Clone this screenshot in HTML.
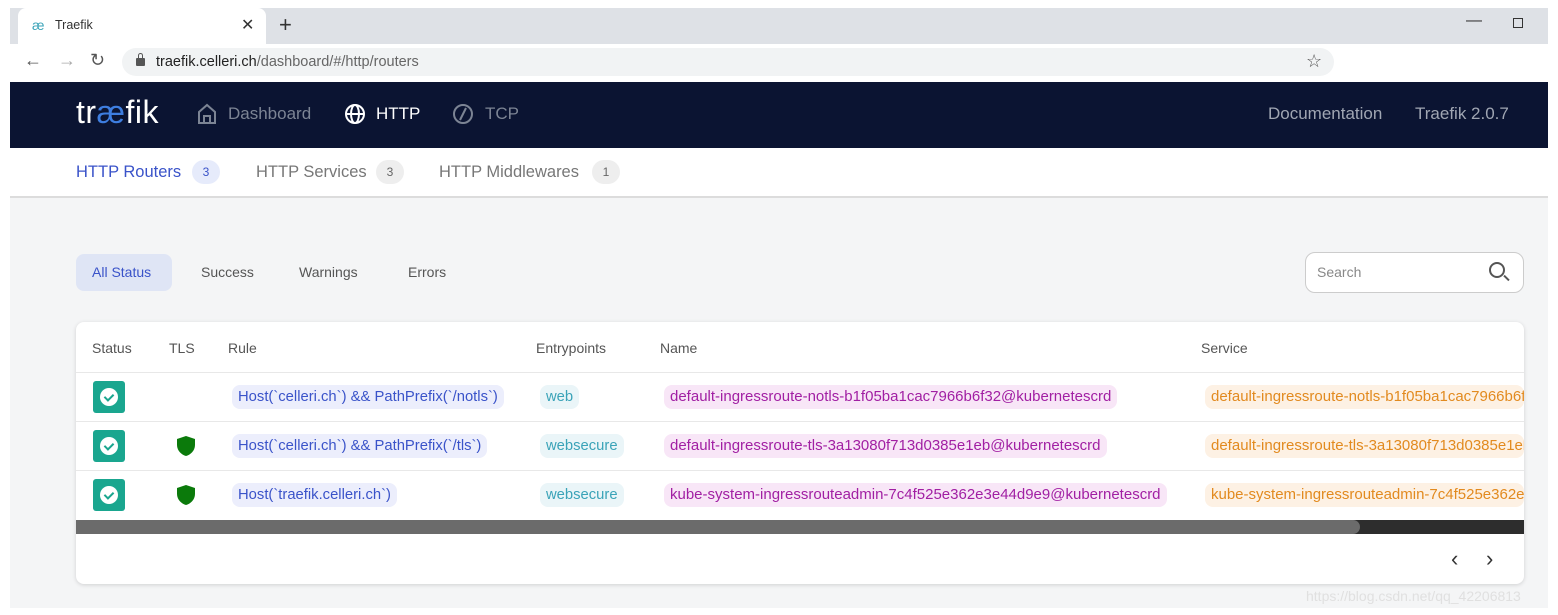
<!DOCTYPE html>
<html><head><style>
*{box-sizing:border-box;margin:0;padding:0}
body{width:1558px;height:615px;background:#fff;font-family:"Liberation Sans",sans-serif;position:relative;overflow:hidden}
.abs{position:absolute}
.tabbar{left:10px;top:8px;width:1538px;height:36px;background:#dee1e6}
.tab{left:18px;top:8px;width:248px;height:36px;background:#fff;border-radius:8px 8px 0 0}
.addr{left:10px;top:44px;width:1538px;height:37px;background:#fff}
.url{left:122px;top:48px;width:1212px;height:28px;background:#f1f3f4;border-radius:14px}
.nav{left:10px;top:82px;width:1538px;height:66px;background:#0b1432}
.sub{left:10px;top:148px;width:1538px;height:50px;background:#fff;border-bottom:2px solid #dcdcdc}
.main{left:10px;top:198px;width:1538px;height:410px;background:#f4f5f6}
.navt{color:#7c8494;font-size:17px;top:104px}
.cnt{display:inline-block;width:28px;height:24px;border-radius:12px;font-size:12px;text-align:center;line-height:24px;color:#666;background:#eee;position:absolute}
.card{left:76px;top:322px;width:1448px;height:262px;background:#fff;border-radius:8px;box-shadow:0 1px 4px rgba(0,0,0,.15);overflow:hidden}
.th{top:340px;font-size:14px;color:#555}
.row{left:76px;width:1448px;height:49px;border-top:1px solid #e8e8e8}
.chk{left:93px;width:32px;height:32px;background:#1aa68f;border-radius:3px}
.chk::before{content:"";position:absolute;left:7px;top:7px;width:18px;height:18px;border-radius:50%;background:#fff}
.chk::after{content:"";position:absolute;left:13px;top:11px;width:4px;height:7px;border:solid #1aa68f;border-width:0 2px 2px 0;transform:rotate(45deg)}
.pill{height:24px;line-height:24px;border-radius:8px;font-size:14.8px;padding:0 6px;white-space:nowrap}
.r{background:#eceefc;color:#3a53c9}
.e{background:#eaf5f8;color:#3aa3b8}
.n{background:#f8e6f7;color:#a11fa3;font-size:15px}
.s{background:#fdf1e4;color:#e28a1f;overflow:hidden;font-size:15px}
</style></head><body>
<div class="abs tabbar"></div>
<div class="abs tab"></div>
<div class="abs" style="left:32px;top:17px;color:#3aa3b8;font-size:14px">æ</div>
<div class="abs" style="left:55px;top:18px;font-size:12.5px;color:#333">Traefik</div>
<div class="abs" style="left:241px;top:15px;font-size:16px;color:#333">✕</div>
<div class="abs" style="left:279px;top:12px;font-size:22px;color:#333">+</div>
<div class="abs" style="left:1466px;top:12px;font-size:16px;color:#333">—</div>
<div class="abs" style="left:1513px;top:18px;width:10px;height:10px;border:1.5px solid #333"></div>
<div class="abs addr"></div>
<div class="abs" style="left:24px;top:50px;font-size:18px;color:#555">←</div>
<div class="abs" style="left:58px;top:50px;font-size:18px;color:#aaa">→</div>
<div class="abs" style="left:90px;top:50px;font-size:18px;color:#555">↻</div>
<div class="abs url"></div>
<div class="abs" style="left:136px;top:58px;width:9px;height:8px;background:#555;border-radius:1px"></div>
<div class="abs" style="left:138px;top:53px;width:5px;height:6px;border:1.5px solid #555;border-bottom:none;border-radius:3px 3px 0 0"></div>
<div class="abs" style="left:156px;top:54px;font-size:14.5px;color:#222">traefik.celleri.ch<span style="color:#666">/dashboard/#/http/routers</span></div>
<div class="abs" style="left:1306px;top:51px;font-size:18px;color:#555">☆</div>
<div class="abs nav"></div>
<div class="abs" style="left:76px;top:94px;font-size:32px;color:#fff;letter-spacing:.5px">tr<span style="color:#3e7ee0">æ</span>fik</div>
<svg class="abs" style="left:197px;top:103px" width="20" height="22" viewBox="0 0 20 22"><path d="M2 9 L10 2 L18 9 V20 H2 Z M7 20 V13 H13 V20" fill="none" stroke="#7c8494" stroke-width="2"/></svg>
<div class="abs navt" style="left:228px">Dashboard</div>
<svg class="abs" style="left:344px;top:103px" width="22" height="22" viewBox="0 0 22 22"><circle cx="11" cy="11" r="9" fill="none" stroke="#fff" stroke-width="2"/><ellipse cx="11" cy="11" rx="4" ry="9" fill="none" stroke="#fff" stroke-width="2"/><path d="M2 11 H20" stroke="#fff" stroke-width="2"/></svg>
<div class="abs navt" style="left:376px;color:#fff">HTTP</div>
<svg class="abs" style="left:452px;top:103px" width="22" height="22" viewBox="0 0 22 22"><circle cx="11" cy="11" r="9" fill="none" stroke="#7c8494" stroke-width="2"/><path d="M8 17 L14 5" stroke="#7c8494" stroke-width="2"/></svg>
<div class="abs navt" style="left:485px">TCP</div>
<div class="abs navt" style="left:1268px;color:#a0a6b3">Documentation</div>
<div class="abs navt" style="left:1415px;color:#a0a6b3">Traefik 2.0.7</div>
<div class="abs sub"></div>
<div class="abs" style="left:76px;top:163px;font-size:16.5px;color:#3a53c9">HTTP Routers</div>
<span class="cnt" style="left:192px;top:160px;background:#e6ebfb;color:#3a53c9">3</span>
<div class="abs" style="left:256px;top:163px;font-size:16.5px;color:#777">HTTP Services</div>
<span class="cnt" style="left:376px;top:160px">3</span>
<div class="abs" style="left:439px;top:163px;font-size:16.5px;color:#777">HTTP Middlewares</div>
<span class="cnt" style="left:592px;top:160px">1</span>
<div class="abs main"></div>
<div class="abs" style="left:76px;top:254px;width:96px;height:37px;background:#dfe5f5;border-radius:8px"></div>
<div class="abs" style="left:92px;top:264px;font-size:14px;color:#3a53c9">All Status</div>
<div class="abs" style="left:201px;top:264px;font-size:14px;color:#555">Success</div>
<div class="abs" style="left:299px;top:264px;font-size:14px;color:#555">Warnings</div>
<div class="abs" style="left:408px;top:264px;font-size:14px;color:#555">Errors</div>
<div class="abs" style="left:1305px;top:252px;width:219px;height:41px;background:#fff;border:1px solid #ccc;border-radius:10px"></div>
<div class="abs" style="left:1317px;top:264px;font-size:14px;color:#888">Search</div>
<div class="abs" style="left:1489px;top:262px;width:16px;height:16px;border:2px solid #555;border-radius:50%"></div>
<div class="abs" style="left:1503px;top:277px;width:7px;height:2px;background:#555;transform:rotate(45deg)"></div>
<div class="abs card"></div>
<div class="abs th" style="left:92px">Status</div>
<div class="abs th" style="left:169px">TLS</div>
<div class="abs th" style="left:228px">Rule</div>
<div class="abs th" style="left:536px">Entrypoints</div>
<div class="abs th" style="left:660px">Name</div>
<div class="abs th" style="left:1201px">Service</div>
<div class="abs row" style="top:372px"></div>
<div class="abs row" style="top:421px"></div>
<div class="abs row" style="top:470px"></div>
<div class="abs chk" style="top:381px"></div>
<div class="abs chk" style="top:430px"></div>
<div class="abs chk" style="top:479px"></div>
<svg class="abs" style="left:176px;top:435px" width="20" height="22" viewBox="0 0 20 22"><path d="M10 1 L19 4 V10 C19 16 14 20 10 21 C6 20 1 16 1 10 V4 Z" fill="#0b7a0b"/></svg>
<svg class="abs" style="left:176px;top:484px" width="20" height="22" viewBox="0 0 20 22"><path d="M10 1 L19 4 V10 C19 16 14 20 10 21 C6 20 1 16 1 10 V4 Z" fill="#0b7a0b"/></svg>
<div class="abs pill r" style="left:232px;top:385px">Host(`celleri.ch`) &amp;&amp; PathPrefix(`/notls`)</div>
<div class="abs pill r" style="left:232px;top:434px">Host(`celleri.ch`) &amp;&amp; PathPrefix(`/tls`)</div>
<div class="abs pill r" style="left:232px;top:483px">Host(`traefik.celleri.ch`)</div>
<div class="abs pill e" style="left:540px;top:385px">web</div>
<div class="abs pill e" style="left:540px;top:434px">websecure</div>
<div class="abs pill e" style="left:540px;top:483px">websecure</div>
<div class="abs pill n" style="left:664px;top:385px">default-ingressroute-notls-b1f05ba1cac7966b6f32@kubernetescrd</div>
<div class="abs pill n" style="left:664px;top:434px">default-ingressroute-tls-3a13080f713d0385e1eb@kubernetescrd</div>
<div class="abs pill n" style="left:664px;top:483px">kube-system-ingressrouteadmin-7c4f525e362e3e44d9e9@kubernetescrd</div>
<div class="abs pill s" style="left:1205px;top:385px;width:319px">default-ingressroute-notls-b1f05ba1cac7966b6f32@kubernetescrd</div>
<div class="abs pill s" style="left:1205px;top:434px;width:319px">default-ingressroute-tls-3a13080f713d0385e1eb@kubernetescrd</div>
<div class="abs pill s" style="left:1205px;top:483px;width:319px">kube-system-ingressrouteadmin-7c4f525e362e3e44d9e9@kubernetescrd</div>
<div class="abs" style="left:76px;top:520px;width:1448px;height:14px;background:#2d2d2d"></div>
<div class="abs" style="left:76px;top:520px;width:1284px;height:14px;background:#6b6b6b;border-radius:0 7px 7px 0"></div>
<div class="abs" style="left:1451px;top:546px;font-size:22px;color:#333">‹</div>
<div class="abs" style="left:1486px;top:546px;font-size:22px;color:#333">›</div>
<div class="abs" style="left:1306px;top:588px;font-size:14px;color:#e0e0e0">https://blog.csdn.net/qq_42206813</div>
</body></html>
